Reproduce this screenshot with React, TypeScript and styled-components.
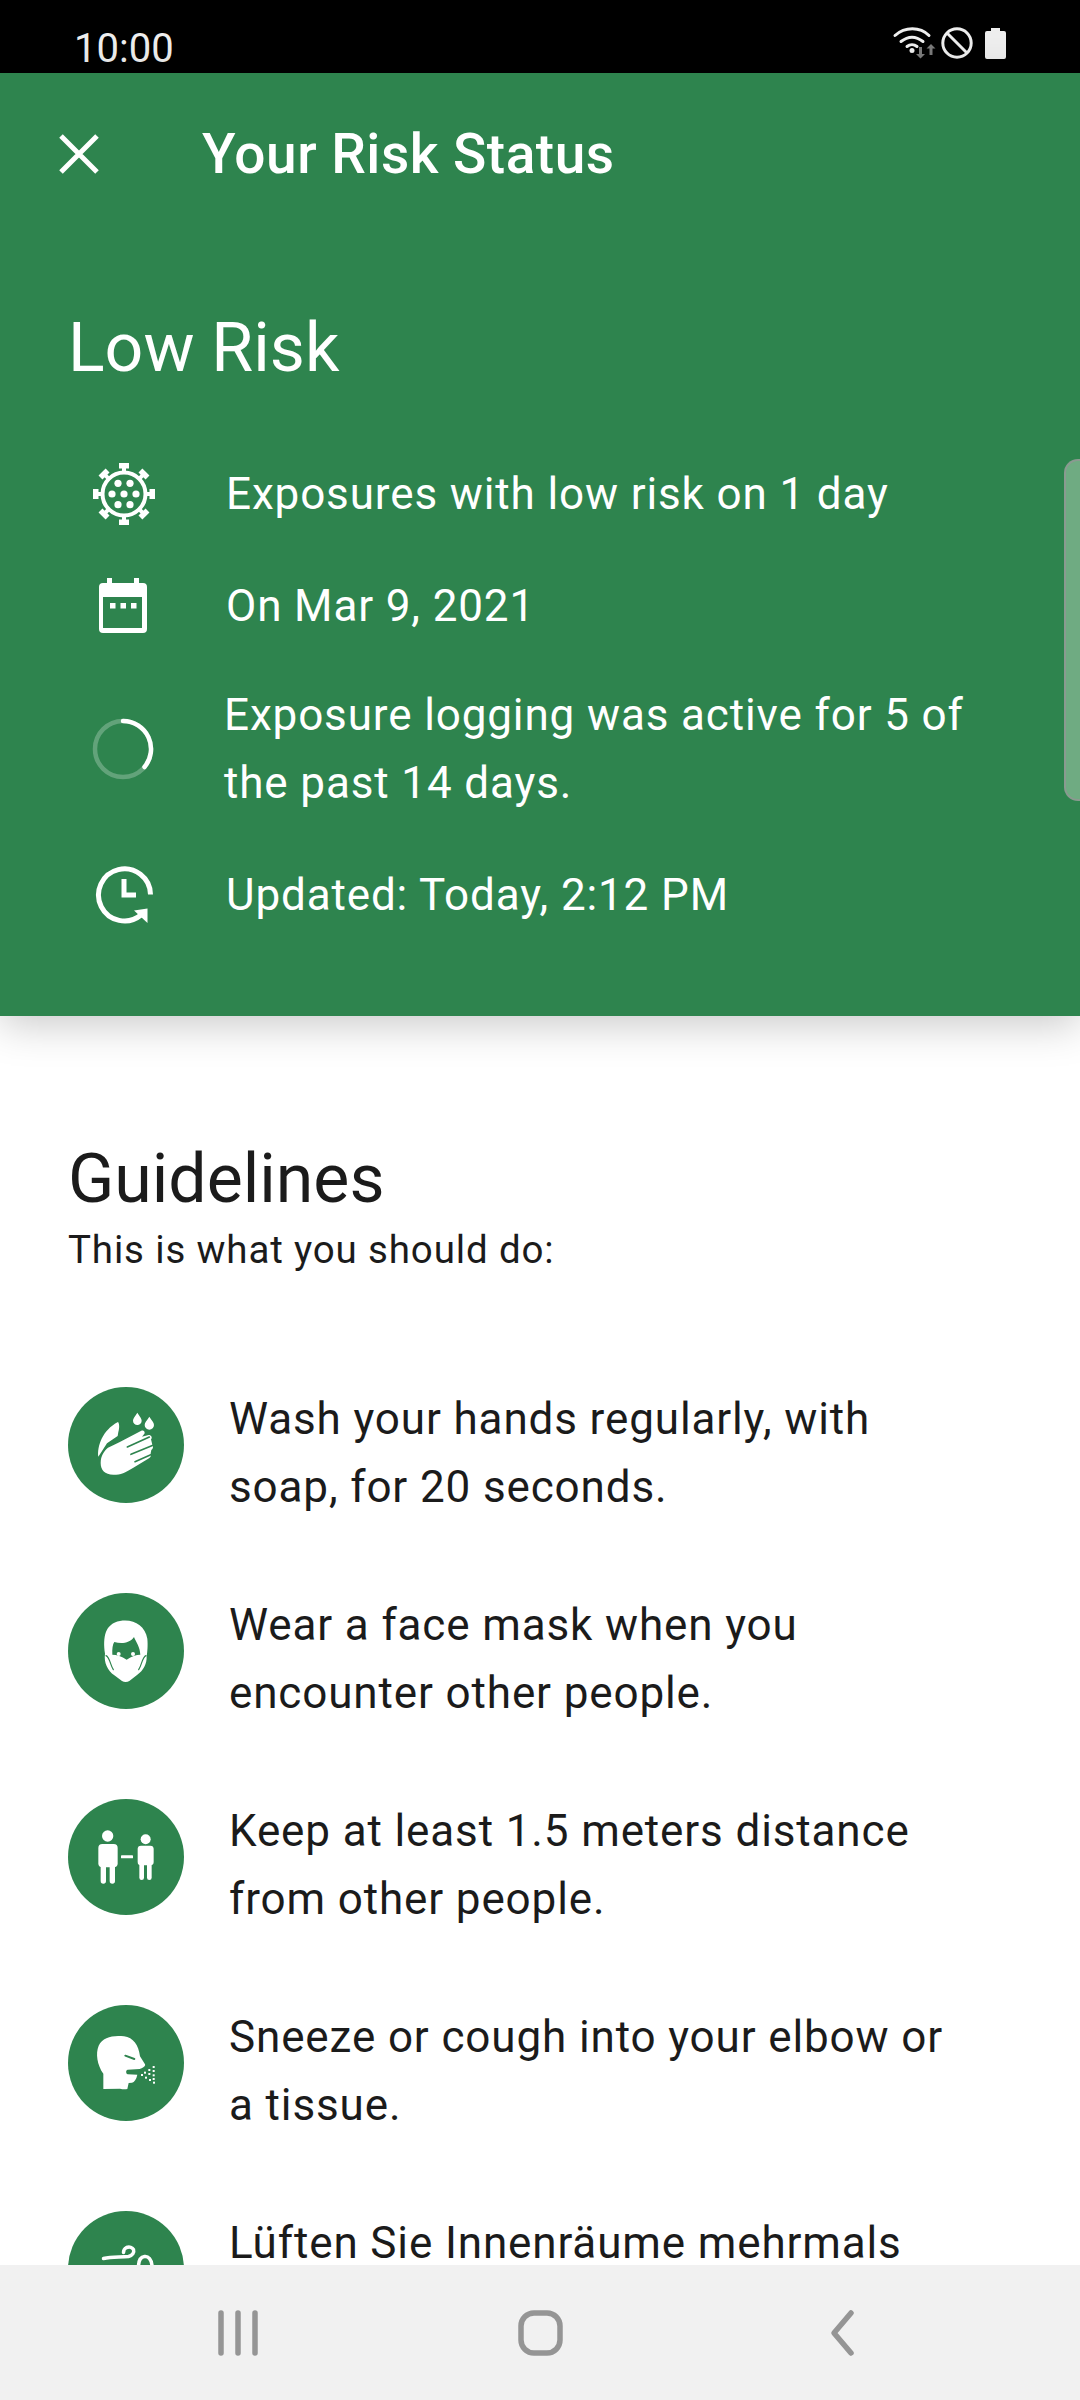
import React from 'react';
import styled, { createGlobalStyle } from 'styled-components';

const GREEN = '#2e844e';

const GlobalStyle = createGlobalStyle`
  html, body { margin: 0; padding: 0; background: #fff; }
  * { box-sizing: border-box; }
`;

const Screen = styled.div`
  position: relative;
  width: 1080px;
  height: 2400px;
  display: flex;
  flex-direction: column;
  overflow: hidden;
  font-family: Roboto, "Liberation Sans", sans-serif;
  background: #fff;
`;

const StatusBar = styled.div`
  height: 73px;
  flex: none;
  background: #000;
  display: flex;
  align-items: flex-end;
  justify-content: space-between;
  padding: 0 70px 0 74px;
  color: #eee;
`;

const Clock = styled.span`
  font-size: 40px;
  line-height: 48px;
`;

const StatusGlyphs = styled.svg`
  width: 120px;
  height: 40px;
  margin-bottom: 8px;
`;

const Header = styled.header`
  position: relative;
  z-index: 2;
  flex: none;
  height: 943px;
  background: ${GREEN};
  box-shadow: 0 8px 40px rgba(0, 0, 0, 0.22);
  color: #fff;
`;

const Toolbar = styled.div`
  height: 162px;
  display: flex;
  align-items: center;
  padding-left: 58px;
`;

const CloseButton = styled.svg`
  width: 42px;
  height: 42px;
  margin-right: 102px;
`;

const Title = styled.h1`
  margin: 0;
  font-size: 55px;
  font-weight: 500;
  letter-spacing: 0.5px;
`;

const RiskLevel = styled.h2`
  margin: 73px 0 72px;
  padding-left: 68px;
  font-size: 68px;
  line-height: 80px;
  font-weight: 400;
`;

const RiskList = styled.div`
  display: flex;
  flex-direction: column;
  gap: 44px;
`;

const RiskRow = styled.div<{ $tight?: boolean }>`
  display: flex;
  align-items: center;
  padding-left: 92px;
  margin-top: ${(p) => (p.$tight ? '-3px' : '0')};
`;

const RiskIcon = styled.svg`
  flex: none;
  width: 64px;
  height: 64px;
  margin-right: 70px;
`;

const RiskText = styled.div<{ $tight?: boolean }>`
  font-size: 44px;
  line-height: 68px;
  letter-spacing: 0.87px;
  width: 760px;
  margin-left: ${(p) => (p.$tight ? '-2px' : '0')};
`;

const ScrollThumb = styled.div`
  position: absolute;
  top: 386px;
  right: 0;
  width: 16px;
  height: 342px;
  border-radius: 14px 0 0 14px;
  background: #6fab82;
  border: 2px solid #8a9a90;
  border-right: 0;
`;

const Content = styled.main`
  flex: 1;
  min-height: 0;
  overflow: hidden;
  padding: 121px 0 0 68px;
`;

const Heading = styled.h2`
  margin: 0;
  font-size: 68px;
  line-height: 84px;
  font-weight: 400;
  color: #1b1b1b;
`;

const Subheading = styled.p`
  margin: 4px 0 0;
  font-size: 38.5px;
  line-height: 50px;
  letter-spacing: 0.85px;
  color: #1b1b1b;
`;

const GuideList = styled.div`
  margin-top: 110px;
  display: flex;
  flex-direction: column;
  gap: 70px;
`;

const GuideRow = styled.div`
  display: flex;
  align-items: flex-start;
  color: #1b1b1b;
`;

const GuideBadge = styled.svg`
  flex: none;
  width: 116px;
  height: 116px;
  margin: 2px 45px 0 0;
  border-radius: 50%;
  background: ${GREEN};
`;

const GuideText = styled.div`
  font-size: 44px;
  line-height: 68px;
  letter-spacing: 0.87px;
  width: 725px;
`;

const NavBar = styled.nav`
  flex: none;
  height: 135px;
  background: #f1f1f1;
  display: flex;
  justify-content: center;
  align-items: flex-start;
  padding-top: 43px;
`;

const NavCell = styled.div`
  width: 302px;
  display: flex;
  justify-content: center;
`;

const NavIcon = styled.svg`
  width: 50px;
  height: 50px;
  fill: none;
  stroke: #959595;
  stroke-width: 5.5;
  stroke-linecap: round;
  stroke-linejoin: round;
`;

const StatusIcons = () => (
  <StatusGlyphs viewBox="890 28 120 40">
    <g fill="none" stroke="#eee" strokeWidth="3" strokeLinecap="round">
      <path d="M895 38.5c10-9 25-9 34 0" />
      <path d="M901 44.5c7-5.500 15-5.500 22 0" />
      <path d="M907 49.5c3-2.500 7-2.500 10 0" />
    </g>
    <circle cx="912" cy="53.500" r="2.500" fill="#eee" />
    <g fill="#7a7a7a">
      <path d="M919 50h3v7h3l-4.500 4.500-4.500-4.500h3z" />
      <path d="M931 47l4.500 4.500h-3v6.500h-3v-6.500h-3z" />
    </g>
    <circle cx="957" cy="46" r="14.200" fill="none" stroke="#eee" strokeWidth="3" />
    <path d="M947 36l20 20" stroke="#eee" strokeWidth="3" />
    <path d="M991 31h9v3h4a2 2 0 0 1 2 2v24a2 2 0 0 1-2 2h-17a2 2 0 0 1-2-2v-24a2 2 0 0 1 2-2h4z" fill="#eee" />
  </StatusGlyphs>
);

// virus, drawn in a 64 box round its centre
const VirusIcon = () => {
  const spikes = [0, 45, 90, 135, 180, 225, 270, 315];
  const dots = [[26, 21.3], [38, 21.3], [20, 32], [32, 32], [44, 32], [26, 42.7], [38, 42.7]];
  return (
    <RiskIcon viewBox="0 0 64 64">
      <circle cx="32" cy="32" r="21.500" fill="none" stroke="#fff" strokeWidth="4" />
      {spikes.map((a) => (
        <g key={a} transform={`rotate(${a} 32 32)`} fill="#fff">
          <rect x="30" y="4" width="4" height="7" />
          <rect x="27" y="1" width="10" height="5.500" />
        </g>
      ))}
      {dots.map(([x, y]) => (
        <circle key={`${x}-${y}`} cx={x} cy={y} r="3.600" fill="#fff" />
      ))}
    </RiskIcon>
  );
};

const CalendarIcon = () => (
  <RiskIcon viewBox="0 0 64 64">
    <path
      fill="#fff"
      fillRule="evenodd"
      d="M15 4h5v5h22V4h5v5h4a4 4 0 0 1 4 4v42a4 4 0 0 1-4 4H11a4 4 0 0 1-4-4V13a4 4 0 0 1 4-4h4zM11 23v31h39V23z"
    />
    <rect x="18" y="29" width="5.500" height="5.500" fill="#fff" />
    <rect x="28.500" y="29" width="5.500" height="5.500" fill="#fff" />
    <rect x="39" y="29" width="5.500" height="5.500" fill="#fff" />
  </RiskIcon>
);

const ProgressIcon = () => (
  <RiskIcon viewBox="0 0 64 64">
    <circle cx="31" cy="32" r="28" fill="none" stroke="#fff" strokeOpacity="0.25" strokeWidth="4.500" />
    <path d="M31 4a28 28 0 0 1 21.500 46" fill="none" stroke="#fff" strokeWidth="4.500" strokeLinecap="round" />
  </RiskIcon>
);

const UpdatedIcon = () => (
  <RiskIcon viewBox="0 0 64 64">
    <path d="M58.500 31.500A26 26 0 1 0 49 52" fill="none" stroke="#fff" strokeWidth="5" />
    <path d="M32 16v16h12" fill="none" stroke="#fff" strokeWidth="5" />
    <path d="M55.500 45.500v14.500L42 47.500z" fill="#fff" />
  </RiskIcon>
);

const HandsBadge = () => (
  <GuideBadge viewBox="54 50 348 348">
    <g fill="#fff">
      <path d="M262 127c8 12 13 18 13 24a13 13 0 0 1-26 0c0-6 5-12 13-24z" />
      <path d="M298 139c8 12 14 18 14 25a14 14 0 0 1-28 0c0-7 6-13 14-25z" />
      <path d="M204 155c5 6 4 20 1 30l-2 12-32 22-26 40c-4-30 12-80 59-104z" />
      <path d="M152 278c0-22 10-36 22-46l34-16 66-35c8-3 13 6 8 11l-6 7 20-5c8 0 12 8 7 13l4 16c4 6 2 12-3 16l-2 10c2 6 1 11-5 15l-47 28c-26 16-36 21-60 21-26 0-38-14-38-35z" />
    </g>
    <g fill="none" stroke={GREEN} strokeWidth="5" strokeLinecap="round">
      <path d="M232 230l66-30" />
      <path d="M243 252l66-27" />
      <path d="M255 274l54-24" />
    </g>
  </GuideBadge>
);

const MaskBadge = () => (
  <GuideBadge viewBox="54 668 348 348">
    <path
      fill="#fff"
      d="M165 850c-7-50 0-90 45-98 40-7 75 13 82 53 2 20 0 40-2 52 1 24-10 44-28 56l-24 19c-6 4-16 4-22 0l-23-17c-20-15-32-38-28-65z"
    />
    <path
      fill={GREEN}
      d="M187 853c-1-18 1-31 6-38 22 7 47 3 59-15 6 15 18 30 19 53-13 0-26 5-41 15-15-10-30-15-43-15z"
    />
    <circle cx="206" cy="851" r="6" fill="#fff" />
    <circle cx="249" cy="851" r="6" fill="#fff" />
    <g fill="none" stroke={GREEN} strokeWidth="3.500" strokeLinecap="round">
      <path d="M168 856c6 2 10 12 14 24 2 6 4 12 8 18" />
      <path d="M288 856c-6 2-10 12-14 24-2 6-4 12-8 18" />
    </g>
  </GuideBadge>
);

const DistanceBadge = () => (
  <GuideBadge viewBox="54 57 348 348">
    <g fill="#fff">
      <circle cx="173" cy="168" r="17" />
      <rect x="145" y="192" width="58" height="70" rx="12" />
      <rect x="152" y="245" width="16" height="66" rx="8" />
      <rect x="179" y="245" width="16" height="66" rx="8" />
      <circle cx="287" cy="178" r="15" />
      <rect x="263" y="197" width="48" height="59" rx="10" />
      <rect x="268" y="240" width="14" height="60" rx="7" />
      <rect x="291" y="240" width="14" height="60" rx="7" />
      <rect x="213" y="226" width="36" height="9" rx="2" />
    </g>
  </GuideBadge>
);

const SneezeBadge = () => {
  const drops = [
    [311, 861], [298, 870], [311, 873], [285, 878], [298, 882], [311, 886],
    [276, 885], [288, 893], [300, 900], [311, 897], [312, 908],
  ];
  return (
    <GuideBadge viewBox="54 675 348 348">
      <path
        fill="#fff"
        d="M160 927v-46c-18-26-24-60-14-84 12-26 44-32 76-28 28 4 44 26 48 60l15 24c2 4-2 8-10 12l-6 2-36 2c-6 0-6 12 0 14l29 1c-3 14-9 22-16 24l-10 1-4 18c-8 2-14 1-22-1z"
      />
      <path d="M226 827l27 10" stroke={GREEN} strokeWidth="6" strokeLinecap="round" />
      {drops.map(([x, y]) => (
        <rect key={`${x}-${y}`} x={x - 3} y={y - 3} width="6" height="6" fill="#fff" />
      ))}
    </GuideBadge>
  );
};

const AirBadge = () => (
  <GuideBadge viewBox="0 0 116 116">
    <g fill="none" stroke="#fff" strokeWidth="3.500" strokeLinecap="round">
      <path d="M35.500 47.500c9-2 17-1 25-2 4-1 6-4 5-7-1-2-4-3-7-2-2 1-3 3-3 5" />
      <path d="M70.500 56c0-6 2-10 6-10.500 4-.5 7 3 7.500 9" />
    </g>
  </GuideBadge>
);

const guides = [
  { icon: <HandsBadge />, text: 'Wash your hands regularly, with soap, for 20 seconds.' },
  { icon: <MaskBadge />, text: 'Wear a face mask when you encounter other people.' },
  { icon: <DistanceBadge />, text: 'Keep at least 1.5 meters distance from other people.' },
  { icon: <SneezeBadge />, text: 'Sneeze or cough into your elbow or a tissue.' },
  { icon: <AirBadge />, text: 'Lüften Sie Innenräume mehrmals' },
];

export default function App() {
  return (
    <Screen>
      <GlobalStyle />
      <StatusBar>
        <Clock>10:00</Clock>
        <StatusIcons />
      </StatusBar>
      <Header>
        <Toolbar>
          <CloseButton viewBox="0 0 42 42">
            <path d="M3 3l36 36M39 3L3 39" stroke="#fff" strokeWidth="5" />
          </CloseButton>
          <Title>Your Risk Status</Title>
        </Toolbar>
        <RiskLevel>Low Risk</RiskLevel>
        <RiskList>
          <RiskRow>
            <VirusIcon />
            <RiskText>Exposures with low risk on 1 day</RiskText>
          </RiskRow>
          <RiskRow>
            <CalendarIcon />
            <RiskText>On Mar 9, 2021</RiskText>
          </RiskRow>
          <RiskRow $tight>
            <ProgressIcon />
            <RiskText $tight>Exposure logging was active for 5 of the past 14 days.</RiskText>
          </RiskRow>
          <RiskRow>
            <UpdatedIcon />
            <RiskText>Updated: Today, 2:12 PM</RiskText>
          </RiskRow>
        </RiskList>
        <ScrollThumb />
      </Header>
      <Content>
        <Heading>Guidelines</Heading>
        <Subheading>This is what you should do:</Subheading>
        <GuideList>
          {guides.map((g) => (
            <GuideRow key={g.text}>
              {g.icon}
              <GuideText>{g.text}</GuideText>
            </GuideRow>
          ))}
        </GuideList>
      </Content>
      <NavBar>
        <NavCell>
          <NavIcon viewBox="0 0 50 50">
            <path d="M8 5v40M25 5v40M42 5v40" />
          </NavIcon>
        </NavCell>
        <NavCell>
          <NavIcon viewBox="0 0 50 50">
            <rect x="6" y="5" width="39" height="40" rx="13" />
          </NavIcon>
        </NavCell>
        <NavCell>
          <NavIcon viewBox="0 0 50 50">
            <path d="M34 5L17 25l17 20" />
          </NavIcon>
        </NavCell>
      </NavBar>
    </Screen>
  );
}
